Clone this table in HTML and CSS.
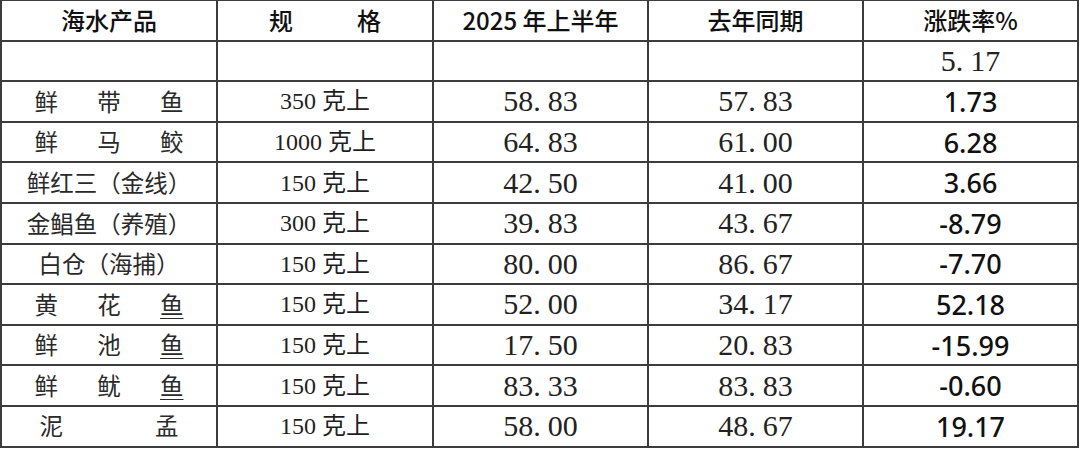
FILE: index.html
```html
<!DOCTYPE html>
<html lang="zh-CN">
<head>
<meta charset="utf-8">
<title>海水产品价格</title>
<link rel="stylesheet" href="styles.css">
</head>
<body>
<table class="price-table">
  <colgroup>
    <col class="c1"><col class="c2"><col class="c3"><col class="c4"><col class="c5">
  </colgroup>
  <thead>
    <tr>
      <th class="hd">海水产品</th>
      <th class="hd"><span class="spread spread-spec"><span>规</span><span>格</span></span></th>
      <th class="hd"><span class="narrow">2025 </span>年上半年</th>
      <th class="hd">去年同期</th>
      <th class="hd">涨跌率%</th>
    </tr>
  </thead>
  <tbody>
    <tr>
      <td></td><td></td><td></td><td></td>
      <td class="num">5<span class="dp">.</span>17</td>
    </tr>
    <tr>
      <td class="name"><span class="spread"><span>鲜</span><span>带</span><span>鱼</span></span></td>
      <td class="spec">350 克上</td>
      <td class="num">58<span class="dp">.</span>83</td>
      <td class="num">57<span class="dp">.</span>83</td>
      <td class="pct">1.73</td>
    </tr>
    <tr>
      <td class="name"><span class="spread"><span>鲜</span><span>马</span><span>鲛</span></span></td>
      <td class="spec">1000 克上</td>
      <td class="num">64<span class="dp">.</span>83</td>
      <td class="num">61<span class="dp">.</span>00</td>
      <td class="pct">6.28</td>
    </tr>
    <tr>
      <td class="name">鲜红三（金线）</td>
      <td class="spec">150 克上</td>
      <td class="num">42<span class="dp">.</span>50</td>
      <td class="num">41<span class="dp">.</span>00</td>
      <td class="pct">3.66</td>
    </tr>
    <tr>
      <td class="name">金鲳鱼（养殖）</td>
      <td class="spec">300 克上</td>
      <td class="num">39<span class="dp">.</span>83</td>
      <td class="num">43<span class="dp">.</span>67</td>
      <td class="pct">-8.79</td>
    </tr>
    <tr>
      <td class="name">白仓（海捕）</td>
      <td class="spec">150 克上</td>
      <td class="num">80<span class="dp">.</span>00</td>
      <td class="num">86<span class="dp">.</span>67</td>
      <td class="pct">-7.70</td>
    </tr>
    <tr>
      <td class="name"><span class="spread"><span>黄</span><span>花</span><span class="ul">鱼</span></span></td>
      <td class="spec">150 克上</td>
      <td class="num">52<span class="dp">.</span>00</td>
      <td class="num">34<span class="dp">.</span>17</td>
      <td class="pct">52.18</td>
    </tr>
    <tr>
      <td class="name"><span class="spread"><span>鲜</span><span>池</span><span class="ul">鱼</span></span></td>
      <td class="spec">150 克上</td>
      <td class="num">17<span class="dp">.</span>50</td>
      <td class="num">20<span class="dp">.</span>83</td>
      <td class="pct">-15.99</td>
    </tr>
    <tr>
      <td class="name"><span class="spread"><span>鲜</span><span>鱿</span><span class="ul">鱼</span></span></td>
      <td class="spec">150 克上</td>
      <td class="num">83<span class="dp">.</span>33</td>
      <td class="num">83<span class="dp">.</span>83</td>
      <td class="pct">-0.60</td>
    </tr>
    <tr>
      <td class="name"><span class="spread spread-two"><span>泥</span><span>孟</span></span></td>
      <td class="spec">150 克上</td>
      <td class="num">58<span class="dp">.</span>00</td>
      <td class="num">48<span class="dp">.</span>67</td>
      <td class="pct">19.17</td>
    </tr>
  </tbody>
</table>
</body>
</html>
```
FILE: styles.css
```css
html, body {
  margin: 0;
  padding: 0;
  background: #ffffff;
}

.price-table {
  table-layout: fixed;
  width: 1079px;
  border-collapse: separate;
  border-spacing: 0;
  border-top: 1px solid #3c3c3c;
  border-left: 2px solid #3c3c3c;
  font-family: "Noto Sans CJK SC", sans-serif;
  color: #1a1a1a;
}

.c1 { width: 216px; }
.c2 { width: 216px; }
.c3 { width: 215px; }
.c4 { width: 215px; }
.c5 { width: 215px; }

.price-table th,
.price-table td {
  box-sizing: border-box;
  height: 40.6px;
  padding: 0;
  border-right: 2px solid #3c3c3c;
  border-bottom: 2px solid #3c3c3c;
  text-align: center;
  vertical-align: middle;
  line-height: 1;
  white-space: nowrap;
}

.hd {
  font-family: "Noto Sans CJK SC", sans-serif;
  font-size: 24px;
  font-weight: 500;
  color: #111;
}

.narrow {
  font-family: "Liberation Sans Narrow", "Noto Sans CJK SC", sans-serif;
}

.spread {
  display: inline-flex;
  justify-content: space-between;
  width: 149px;
}

.spread-spec {
  width: 112px;
}

.spread-two {
  width: 139px;
}

.name {
  font-family: "Noto Sans CJK SC", sans-serif;
  font-size: 23.5px;
  font-weight: 400;
  color: #2a2a2a;
}

.ul {
  text-decoration: underline;
  text-underline-offset: 4px;
  text-decoration-thickness: 1px;
}

.spec {
  font-family: "Liberation Serif", "Noto Sans CJK SC", serif;
  font-size: 24px;
  color: #1f1f1f;
}

.num {
  font-family: "Liberation Serif", serif;
  font-size: 30px;
  color: #222;
}

.dp {
  margin-right: 7px;
}

.pct {
  font-family: "Noto Sans", sans-serif;
  font-size: 27px;
  font-weight: 500;
  color: #111;
}
```
